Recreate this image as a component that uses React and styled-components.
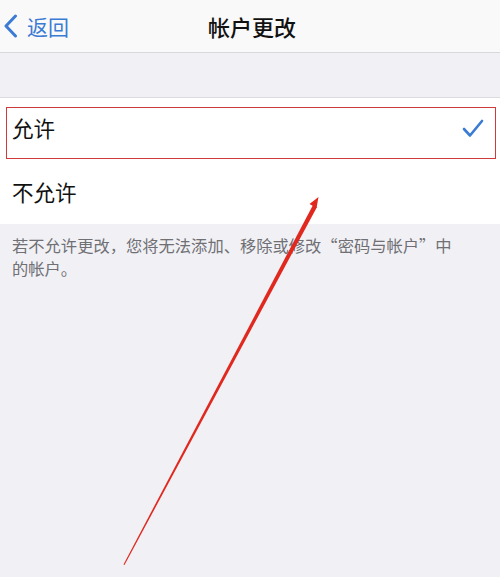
import React from "react";
import styled, { createGlobalStyle } from "styled-components";

const Global = createGlobalStyle`
  html, body { margin: 0; padding: 0; }
  body {
    background: #f1f1f5;
    font-family: "Noto Sans CJK SC", "Noto Sans", sans-serif;
  }
`;

const Page = styled.div`
  position: relative;
  width: 500px;
  height: 577px;
  overflow: hidden;
  background: #f1f1f5;
`;

const NavBar = styled.div`
  height: 52px;
  background: #f9f9f9;
  border-bottom: 1px solid #d8d8dc;
  display: grid;
  grid-template-columns: 1fr auto 1fr;
  align-items: center;
`;

const Back = styled.div`
  display: flex;
  align-items: center;
  gap: 9px;
  padding-left: 3px;
  color: #3b7bd4;
  font-size: 21px;
  line-height: 1;
`;

const Title = styled.div`
  font-size: 22px;
  color: #111;
  font-weight: 500;
  line-height: 1;
  padding-left: 4px;
`;

const Gap = styled.div`
  height: 44px;
  border-bottom: 1px solid #dcdce0;
`;

const List = styled.div`
  background: #fff;
`;

const Row = styled.div`
  position: relative;
  height: ${(p) => (p.$last ? 62 : 64)}px;
  box-sizing: border-box;
  display: flex;
  align-items: center;
  justify-content: space-between;
  padding: 0 16px ${(p) => (p.$last ? 2 : 4)}px 12px;
  font-size: 21.5px;
  line-height: 1;
  color: #111;
`;

const Highlight = styled.div`
  position: absolute;
  left: 6px;
  right: 4px;
  top: 9px;
  bottom: 3px;
  border: 1.5px solid #cf3a3c;
  pointer-events: none;
`;

const Footer = styled.div`
  padding: 10px 12px 0;
  font-size: 16.3px;
  line-height: 23px;
  color: #6f6f74;
`;

const Arrow = styled.svg`
  position: absolute;
  left: 0;
  top: 0;
  pointer-events: none;
`;

export default function App() {
  return (
    <>
      <Global />
      <Page>
        <NavBar>
          <Back>
            <svg width="15" height="24" viewBox="0 0 15 24">
              <path d="M12.5 2 L3 12 L12.5 22" fill="none" stroke="#3b7bd4" strokeWidth="3" strokeLinecap="round" strokeLinejoin="round" />
            </svg>
            <span>返回</span>
          </Back>
          <Title>帐户更改</Title>
          <div />
        </NavBar>
        <Gap />
        <List>
          <Row>
            <span>允许</span>
            <svg width="22" height="19" viewBox="0 0 22 19">
              <path d="M2 10 L8 16.5 L20 2" fill="none" stroke="#3b7bd4" strokeWidth="2.6" strokeLinecap="round" strokeLinejoin="round" />
            </svg>
            <Highlight />
          </Row>
          <Row $last>
            <span>不允许</span>
          </Row>
        </List>
        <Footer>
          若不允许更改，您将无法添加、移除或修改“密码与帐户”中
          <br />
          的帐户。
        </Footer>
        <Arrow width="500" height="577" viewBox="0 0 500 577">
          <polygon points="124.5,565 123.5,564.5 313,205 317,207" fill="#e0281f" />
          <polygon points="318.5,197 309.5,204 316.5,208" fill="#e0281f" />
        </Arrow>
      </Page>
    </>
  );
}
